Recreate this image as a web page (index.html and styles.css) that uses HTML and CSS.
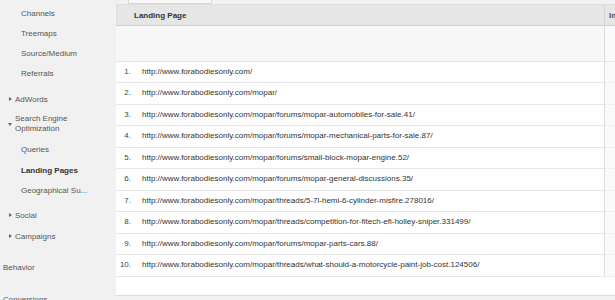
FILE: index.html
```html
<!DOCTYPE html>
<html>
<head>
<meta charset="utf-8">
<link rel="stylesheet" href="styles.css">
</head>
<body>
<div class="page">
  <nav class="sidebar">
    <div class="sub">Channels</div>
    <div class="sub">Treemaps</div>
    <div class="sub">Source/Medium</div>
    <div class="sub">Referrals</div>
    <div class="group closed g-adwords"><span class="tri"></span>AdWords</div>
    <div class="group open g-seo"><span class="tri"></span><span class="two">Search Engine<br>Optimization</span></div>
    <div class="sub">Queries</div>
    <div class="sub active">Landing Pages</div>
    <div class="sub">Geographical Su...</div>
    <div class="group closed g-social"><span class="tri"></span>Social</div>
    <div class="group closed g-camp"><span class="tri"></span>Campaigns</div>
    <div class="top t-behavior">Behavior</div>
    <div class="top t-conv">Conversions</div>
  </nav>
  <main class="main">
    <div class="toolbar"><span class="btn"></span></div>
    <div class="report">
      <div class="grid">
        <div class="hcell hmain">Landing Page</div>
        <div class="hcell hside">Impressions</div>
        <div class="blank bmain"></div>
        <div class="blank bside"></div>

        <div class="num">1.</div><div class="url">http://www.forabodiesonly.com/</div><div class="side"></div>
        <div class="num">2.</div><div class="url">http://www.forabodiesonly.com/mopar/</div><div class="side"></div>
        <div class="num">3.</div><div class="url">http://www.forabodiesonly.com/mopar/forums/mopar-automobiles-for-sale.41/</div><div class="side"></div>
        <div class="num">4.</div><div class="url">http://www.forabodiesonly.com/mopar/forums/mopar-mechanical-parts-for-sale.87/</div><div class="side"></div>
        <div class="num">5.</div><div class="url">http://www.forabodiesonly.com/mopar/forums/small-block-mopar-engine.52/</div><div class="side"></div>
        <div class="num">6.</div><div class="url">http://www.forabodiesonly.com/mopar/forums/mopar-general-discussions.35/</div><div class="side"></div>
        <div class="num">7.</div><div class="url">http://www.forabodiesonly.com/mopar/threads/5-7l-hemi-6-cylinder-misfire.278016/</div><div class="side"></div>
        <div class="num">8.</div><div class="url">http://www.forabodiesonly.com/mopar/threads/competition-for-fitech-efi-holley-sniper.331499/</div><div class="side"></div>
        <div class="num">9.</div><div class="url">http://www.forabodiesonly.com/mopar/forums/mopar-parts-cars.88/</div><div class="side"></div>
        <div class="num">10.</div><div class="url">http://www.forabodiesonly.com/mopar/threads/what-should-a-motorcycle-paint-job-cost.124506/</div><div class="side"></div>
      </div>
      <div class="foot"></div>
    </div>
  </main>
</div>
</body>
</html>
```

FILE: styles.css
```css
* { box-sizing: border-box; }
html, body { margin: 0; padding: 0; }
body {
  font-family: "Liberation Sans", Arial, sans-serif;
  font-size: 8px;
  color: #333;
  background: #f1f1f1;
  overflow: hidden;
}
.page {
  display: flex;
  width: 615px;
  height: 300px;
  overflow: hidden;
}
.sidebar {
  width: 116px;
  flex: none;
  background: #f1f1f1;
  color: #555;
  padding-top: 4px;
}
.sub {
  height: 20px;
  line-height: 20px;
  padding-left: 21px;
  white-space: nowrap;
}
.sub.active { font-weight: bold; color: #333; margin-top: 1px; }
.group {
  display: flex;
  align-items: center;
  height: 20px;
  padding-left: 9px;
}
.tri {
  width: 0;
  height: 0;
  margin-right: 3px;
  flex: none;
}
.closed .tri {
  border-top: 2px solid transparent;
  border-bottom: 2px solid transparent;
  border-left: 3px solid #666;
}
.open .tri {
  border-left: 2px solid transparent;
  border-right: 2px solid transparent;
  border-top: 3px solid #666;
  margin-left: -1px;
  align-self: flex-start;
  margin-top: 9px;
}
.g-adwords { margin-top: 5px; }
.g-seo {
  height: 31px;
  align-items: flex-start;
  padding-top: 5px;
}
.two { line-height: 10px; }
.g-social { margin-top: 4px; }
.g-camp { margin-top: 1px; }
.top {
  height: 20px;
  line-height: 20px;
  padding-left: 3px;
  white-space: nowrap;
}
.t-behavior { margin-top: 12px; }
.t-conv { margin-top: 12px; }

.main {
  flex: 1;
  min-width: 0;
  display: flex;
  flex-direction: column;
  background: #f1f1f1;
}
.toolbar {
  height: 4px;
  overflow: hidden;
  display: flex;
  align-items: flex-end;
  padding-left: 12px;
}
.btn {
  display: block;
  width: 84px;
  height: 10px;
  background: #f8f8f8;
  border: 1px solid #d9d9d9;
  border-top: 0;
}
.report {
  background: #fff;
  height: 292px;
  border-bottom: 1px solid #dcdcdc;
  overflow: hidden;
}
.grid {
  display: grid;
  grid-template-columns: 26px 462px 1fr;
  grid-auto-rows: 21.5px;
  grid-template-rows: 22px 35.5px;
}
.hcell {
  background: #e6e6e6;
  border-top: 1px solid #dedede;
  border-bottom: 1px solid #d0d0d0;
  font-weight: bold;
  line-height: 21px;
  white-space: nowrap;
  overflow: hidden;
}
.hmain {
  grid-column: 1 / 3;
  padding-left: 17px;
  border-left: 1px solid #dedede;
}
.hside {
  border-left: 1px solid #d6d6d6;
  padding-left: 4px;
  color: #555;
}
.blank {
  background: #f7f7f7;
  border-bottom: 1px solid #e6e6e6;
}
.bmain { grid-column: 1 / 3; }
.bside { border-left: 1px solid #dcdcdc; background: #fafafa; }
.num, .url, .side {
  border-bottom: 1px solid #e8e8e8;
  line-height: 20.5px;
  white-space: nowrap;
}
.num {
  text-align: right;
  padding-right: 11px;
  color: #444;
}
.url { color: #333; }
.side {
  border-left: 1px solid #dcdcdc;
  background: #fafafa;
  border-bottom-color: #f0f0f0;
}
.foot { height: 20px; }
```
